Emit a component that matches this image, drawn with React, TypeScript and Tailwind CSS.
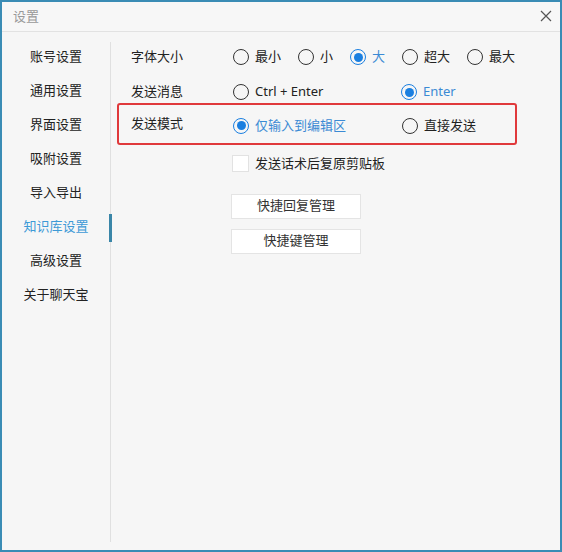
import React from "react";

const menu = [
  "账号设置",
  "通用设置",
  "界面设置",
  "吸附设置",
  "导入导出",
  "知识库设置",
  "高级设置",
  "关于聊天宝",
];

function Radio({ label, checked, className }: { label: string; checked?: boolean; className?: string }) {
  return (
    <div className={"flex items-center " + (className ?? "")}>
      {checked ? (
        <span className="flex h-[16px] w-[16px] items-center justify-center rounded-full border-[1.5px] border-[#1a7fe0]">
          <span className="h-[9px] w-[9px] rounded-full bg-[#1a7fe0]" />
        </span>
      ) : (
        <span className="h-[16px] w-[16px] rounded-full border-[1.5px] border-[#333]" />
      )}
      <span className={"ml-[6px] " + (checked ? "text-[#3b8ad4]" : "text-[#222]")}>{label}</span>
    </div>
  );
}

export default function App() {
  return (
    <div
      className="flex h-[552px] w-[562px] flex-col border-2 border-[#3a8cb5] bg-[#f6f6f6] text-[13px] text-[#222]"
      style={{ fontFamily: '"Noto Sans", "Noto Sans CJK SC", sans-serif' }}
    >
      <div className="flex h-[30px] items-center justify-between border-b border-[#e2e2e2] bg-[#f7f7f7] pl-[11px] pr-[8px]">
        <span className="text-[13px] text-[#999]">设置</span>
        <svg width="12" height="12" viewBox="0 0 12 12" className="mt-[-2px]">
          <path d="M1 1L11 11M11 1L1 11" stroke="#555" strokeWidth="1.2" />
        </svg>
      </div>
      <div className="flex flex-1">
        <div className="flex w-[109px] flex-col pt-[8px]">
          <div className="mt-[2px] mb-[8px] flex flex-1 flex-col border-r border-[#e0e0e0]">
            <div className="mt-[-2px]">
              {menu.map((m) => {
                const active = m === "知识库设置";
                return (
                  <div key={m} className="relative flex h-[34px] items-center justify-center">
                    <span className={active ? "text-[#3d9ad6]" : "text-[#222]"}>{m}</span>
                    {active && <span className="absolute right-[-2px] top-[4px] h-[28px] w-[3px] bg-[#3a86a8]" />}
                  </div>
                );
              })}
            </div>
          </div>
        </div>
        <div className="flex flex-1 flex-col pt-[8px]">
          <div className="flex h-[34px] items-center pl-[20px]">
            <span className="w-[102px]">字体大小</span>
            <div className="flex items-center gap-[17px]">
              <Radio label="最小" />
              <Radio label="小" />
              <Radio label="大" checked />
              <Radio label="超大" />
              <Radio label="最大" />
            </div>
          </div>
          <div className="flex h-[34px] items-center pl-[20px] pt-[2px]">
            <span className="w-[102px]">发送消息</span>
            <Radio label="Ctrl + Enter" className="w-[168px]" />
            <Radio label="Enter" checked />
          </div>
          <div className="ml-[6px] mt-[-5px] h-[42px] w-[400px] rounded-[3px] border-2 border-[#e0393b]">
            <div className="flex h-full items-center pl-[12px] pt-[3px]">
              <span className="mt-[-4px] w-[102px]">发送模式</span>
              <Radio label="仅输入到编辑区" checked className="w-[169px]" />
              <Radio label="直接发送" />
            </div>
          </div>
          <div className="ml-[121px] mt-[9px] flex items-center">
            <span className="h-[17px] w-[17px] border border-[#e2e2e2] bg-white" />
            <span className="ml-[6px]">发送话术后复原剪贴板</span>
          </div>
          <div className="ml-[120px] mt-[20px] flex flex-col gap-[10px]">
            <button className="flex h-[25px] w-[130px] items-center justify-center border border-[#e4e4e4] bg-white text-[13px] text-[#333]">
              快捷回复管理
            </button>
            <button className="flex h-[25px] w-[130px] items-center justify-center border border-[#e4e4e4] bg-white text-[13px] text-[#333]">
              快捷键管理
            </button>
          </div>
        </div>
      </div>
    </div>
  );
}
